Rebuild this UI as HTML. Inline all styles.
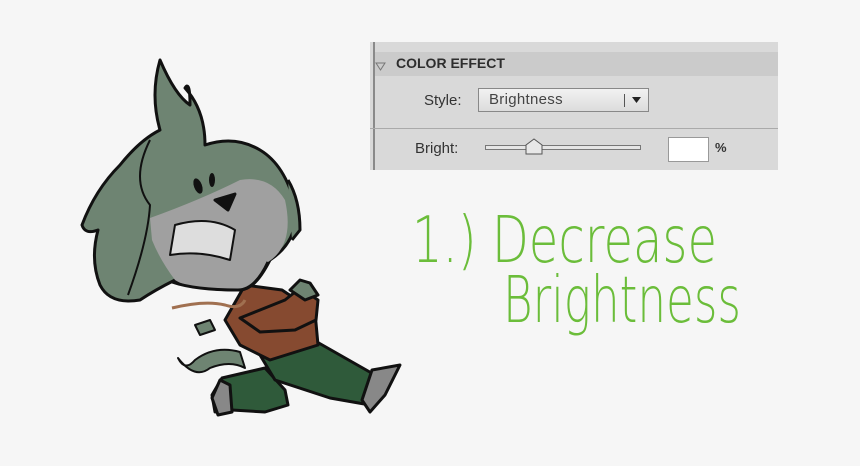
<!DOCTYPE html>
<html><head><style>
html,body{margin:0;padding:0;width:860px;height:466px;overflow:hidden;background:#f6f6f6;font-family:"Liberation Sans",sans-serif}
.panel{position:absolute;left:370px;top:42px;width:408px;height:128px;background:#d9d9d9}
.vl{position:absolute;left:373px;top:42px;width:2px;height:128px;background:#8a8a8a}
.hdr{position:absolute;left:375px;top:52px;width:403px;height:24px;background:#cbcbcb}
.t{position:absolute;font-size:15px;color:#333}
</style></head><body>
<div class="panel"></div>
<div class="hdr"></div>
<div class="vl"></div>
<svg style="position:absolute;left:375px;top:62px" width="12" height="10"><path d="M1 1 L10 1 L5.5 8 Z" fill="none" stroke="#777" stroke-width="1"/></svg>
<div class="t" style="left:396px;top:55px;font-weight:bold;font-size:14px;color:#2e2e2e">COLOR EFFECT</div>
<div class="t" style="left:424px;top:92px">Style:</div>
<div style="position:absolute;left:478px;top:88px;width:171px;height:24px;border:1px solid #888;background:linear-gradient(#f2f2f2,#dcdcdc);box-sizing:border-box"></div>
<div class="t" style="left:489px;top:91px;color:#444;letter-spacing:0.3px">Brightness</div>
<div style="position:absolute;left:624px;top:94px;width:1px;height:13px;background:#555"></div>
<svg style="position:absolute;left:632px;top:97px" width="10" height="8"><path d="M0 0H9L4.5 6Z" fill="#222"/></svg>
<div style="position:absolute;left:370px;top:128px;width:408px;height:1px;background:#aaa"></div>
<div class="t" style="left:415px;top:140px">Bright:</div>
<div style="position:absolute;left:485px;top:145px;width:156px;height:5px;border:1px solid #777;background:#e6e6e6;box-sizing:border-box"></div>
<svg style="position:absolute;left:524px;top:137px" width="20" height="20"><path d="M2 17V8L10 2L18 8V17Z" fill="#e8e8e8" stroke="#555"/></svg>
<div style="position:absolute;left:668px;top:137px;width:41px;height:25px;background:#fff;border:1px solid #999;box-sizing:border-box"></div>
<div class="t" style="left:715px;top:140px;font-weight:bold;font-size:13px;color:#333">%</div>

<svg style="position:absolute;left:0;top:0" width="860" height="466">
<g stroke="#111" stroke-width="3" stroke-linejoin="round">
<path d="M222 378 L265 368 L285 390 L288 405 L265 412 L232 410 L215 412 L212 395Z" fill="#2f5a3a"/>
<path d="M220 380 L212 398 L218 415 L232 412 L230 385Z" fill="#888"/>
<path d="M260 355 L310 338 L375 375 L370 405 L330 398 L275 380Z" fill="#2f5a3a"/>
<path d="M372 370 L400 365 L385 395 L370 412 L362 400Z" fill="#888"/>
<path d="M240 352 Q215 345 195 360 Q185 372 178 358 Q195 380 210 368 Q230 360 245 368Z" fill="#6e8472" stroke-width="2"/>
<path d="M245 285 L282 290 L315 312 L318 345 L270 360 L240 345 L225 320Z" fill="#864a30"/>
<path d="M285 300 L300 288 L318 300 L316 320 L295 330 L260 332 L240 318 L260 310Z" fill="#864a30"/>
<path d="M290 290 L300 280 L310 283 L318 295 L305 300Z" fill="#6e8472"/>
<path d="M195 325 L210 320 L215 330 L200 335Z" fill="#6e8472" stroke-width="2"/>
<path d="M160 130 Q150 95 160 60 Q175 95 190 105 Q190 80 185 88 Q205 110 205 145 Q235 135 260 150 Q285 165 295 205 Q300 240 270 260 Q255 290 240 290 Q195 290 175 280 Q155 290 140 300 Q110 305 100 285 Q90 260 98 230 Q85 235 82 225 Q95 190 120 165 Q140 140 160 130Z" fill="#6e8472"/>
<path d="M150 218 Q200 200 240 180 Q270 175 285 200 Q295 245 268 262 Q250 292 235 290 Q190 290 175 280 Q160 260 152 240Z" fill="#a0a0a0" stroke="none"/>
<path d="M268 262 Q255 290 238 290 Q195 290 172 282" fill="none"/>
<path d="M215 200 L235 194 L228 210Z" fill="#111"/>
<path d="M175 225 Q210 215 235 230 L230 260 Q200 250 170 255Z" fill="#ddd" stroke-width="2"/>
<path d="M150 140 Q130 180 150 205 Q148 240 128 295" fill="none" stroke-width="2"/>
<path d="M288 180 Q300 200 300 230 L292 240" fill="#6e8472"/>
</g>
<ellipse cx="198" cy="186" rx="4" ry="8" fill="#111" transform="rotate(-20 198 186)"/>
<ellipse cx="212" cy="180" rx="3" ry="7" fill="#111"/>
<path d="M172 308 Q205 300 225 305 Q240 310 245 300" fill="none" stroke="#a07050" stroke-width="3"/>
<g font-family="'DejaVu Sans',sans-serif" font-weight="200" fill="#6bbd3a">
<text x="412" y="262" font-size="64" textLength="305" lengthAdjust="spacingAndGlyphs">1.) Decrease</text>
<text x="503" y="322" font-size="64" textLength="238" lengthAdjust="spacingAndGlyphs">Brightness</text>
</g>
</svg>
</body></html>
